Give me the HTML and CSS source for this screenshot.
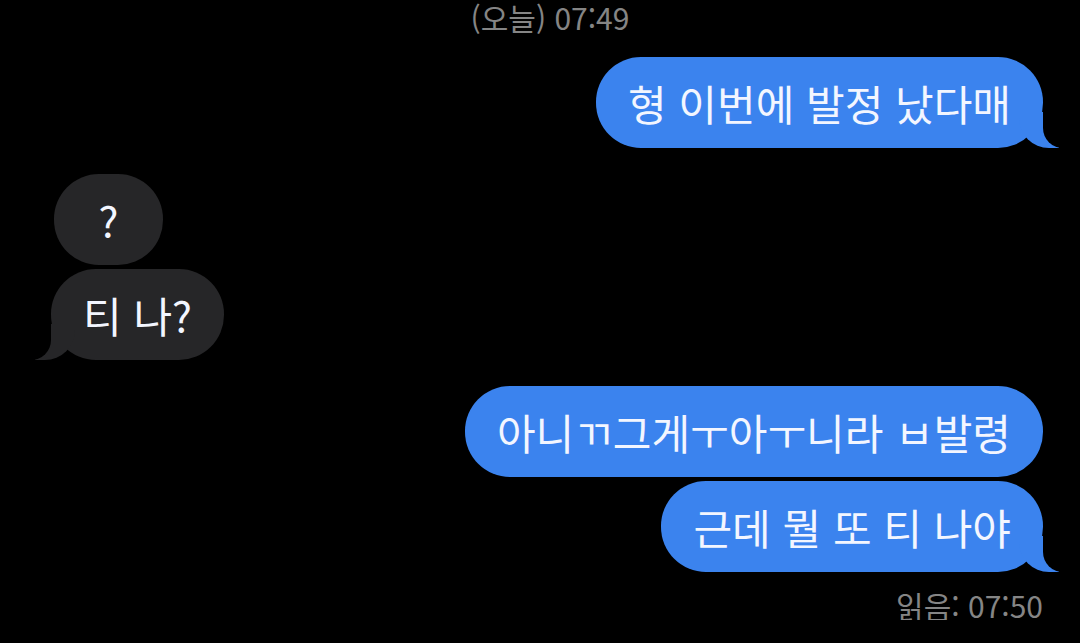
FILE: index.html
```html
<!DOCTYPE html>
<html lang="ko">
<head>
  <meta charset="UTF-8" />
  <meta name="viewport" content="width=device-width, initial-scale=1.0" />
  <title>메시지</title>
  <link rel="stylesheet" href="styles.css">
</head>
<body>

  <div class="chat">
    <div class="stamp">(오늘) 07:49</div>

    <div class="msg sent tail first">형 이번에 발정 났다매</div>

    <div class="group">
      <div class="msg recv short">?</div>
      <div class="msg recv tail">티 나?</div>
    </div>

    <div class="group">
      <div class="msg sent">아니ㄲ그게ㅜ아ㅜ니라 ㅂ발령</div>
      <div class="msg sent tail">근데 뭘 또 티 나야</div>
    </div>

    <div class="read">읽음: 07:50</div>
  </div>

</body>
</html>
```

FILE: styles.css
```css
body {
  font-family: "Noto Sans CJK KR", "Noto Sans", sans-serif;
  background: #000;
  color: #fff;
  margin: 0;
  overflow: hidden;
}
.chat {
  display: flex;
  flex-direction: column;
  padding: 0 37px 0 51px;
}
.stamp {
  text-align: center;
  font-size: 30px;
  line-height: 32px;
  color: #858585;
  padding-left: 6px;
  margin-top: 1px;
}
.group {
  display: flex;
  flex-direction: column;
  gap: 4px;
}
.msg {
  position: relative;
  font-size: 42px;
  line-height: 91px;
  height: 91px;
  padding: 0 32px;
  border-radius: 45px;
  white-space: nowrap;
  color: #f3f6ff;
}
.sent {
  align-self: flex-end;
  background: #3b83ee;
}
.recv {
  align-self: flex-start;
  background: #262628;
}
.short {
  min-width: 45px;
  text-align: center;
  margin-left: 3px;
}
.first { margin-top: 24px; }
.group { margin-top: 26px; }

.sent.tail::before {
  content: "";
  position: absolute;
  bottom: 0;
  right: -16px;
  width: 40px;
  height: 36px;
  background: #3b83ee;
  border-bottom-left-radius: 30px;
}
.sent.tail::after {
  content: "";
  position: absolute;
  bottom: 0;
  right: -20px;
  width: 20px;
  height: 36px;
  background: #000;
  border-bottom-left-radius: 20px;
}
.recv.tail::before {
  content: "";
  position: absolute;
  bottom: 0;
  left: -16px;
  width: 40px;
  height: 36px;
  background: #262628;
  border-bottom-right-radius: 30px;
}
.recv.tail::after {
  content: "";
  position: absolute;
  bottom: 0;
  left: -20px;
  width: 20px;
  height: 36px;
  background: #000;
  border-bottom-right-radius: 20px;
}
.read {
  align-self: flex-end;
  font-size: 30px;
  line-height: 30px;
  color: #858585;
  margin-top: 18px;
}
```
